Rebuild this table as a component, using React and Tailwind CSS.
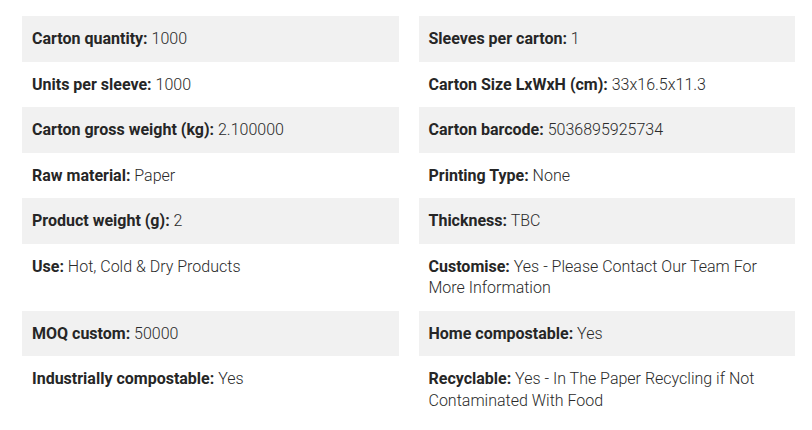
import React from "react"

const specs = [
  ["Carton quantity", "1000"],
  ["Sleeves per carton", "1"],
  ["Units per sleeve", "1000"],
  ["Carton Size LxWxH (cm)", "33x16.5x11.3"],
  ["Carton gross weight (kg)", "2.100000"],
  ["Carton barcode", "5036895925734"],
  ["Raw material", "Paper"],
  ["Printing Type", "None"],
  ["Product weight (g)", "2"],
  ["Thickness", "TBC"],
  ["Use", "Hot, Cold & Dry Products"],
  ["Customise", "Yes - Please Contact Our Team For More Information"],
  ["MOQ custom", "50000"],
  ["Home compostable", "Yes"],
  ["Industrially compostable", "Yes"],
  ["Recyclable", "Yes - In The Paper Recycling if Not Contaminated With Food"],
]

export default function App() {
  return (
    <div className="bg-white w-[812px] h-[430px] pt-4 pl-[22px] pr-[17px]" style={{ fontFamily: "Roboto, 'Liberation Sans', sans-serif" }}>
      <div className="grid grid-cols-2 gap-x-5">
        {specs.map(([label, value], i) => {
          const shaded = Math.floor(i / 2) % 2 === 0
          return (
            <div
              key={label}
              className={`px-2.5 py-3 text-[16px] leading-[21.5px] font-light text-[#2a2a2a] ${shaded ? "bg-[#f1f1f1]" : "bg-white"}`}
            >
              <span className="font-bold text-[#262626]">{label}:</span> {value}
            </div>
          )
        })}
      </div>
    </div>
  )
}
